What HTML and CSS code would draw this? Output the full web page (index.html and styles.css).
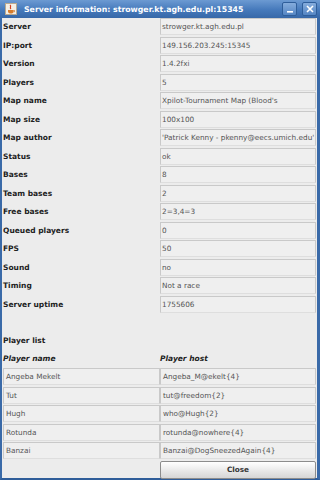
FILE: index.html
```html
<!DOCTYPE html>
<html lang="en">
<head>
    <meta charset="UTF-8">
    <meta name="viewport" content="width=device-width, initial-scale=1.0">
    <title>Server information</title>
    <link rel="stylesheet" href="styles.css">
</head>
<body>
    <div class="window">
        <div class="titlebar">
            <div class="app-icon">
                <svg width="12" height="12" viewBox="0 0 12 12">
                    <rect x="0.5" y="0.5" width="11" height="11" fill="#f4efe6" stroke="#b9a98f"/>
                    <path d="M5 2 C7 3.5 4 4.5 6 6" stroke="#d2401e" stroke-width="1.2" fill="none"/>
                    <path d="M3 7 H8.5 V8.5 C8.5 10 7.5 10.5 6 10.5 C4.5 10.5 3 10 3 8.5 Z" fill="#d77b2a"/>
                    <path d="M8.5 7.5 H9.5 V8.8 H8.5" stroke="#d77b2a" stroke-width="0.8" fill="none"/>
                </svg>
            </div>
            <div class="title">Server information: strowger.kt.agh.edu.pl:15345</div>
            <div class="win-btn">
                <svg width="10" height="10" viewBox="0 0 10 10"><rect x="2" y="7" width="6" height="1.6" fill="#fff"/></svg>
            </div>
            <div class="win-btn">
                <svg width="10" height="10" viewBox="0 0 10 10"><path d="M2 2 L8 8 M8 2 L2 8" stroke="#fff" stroke-width="1.6"/></svg>
            </div>
        </div>

        <div class="content">
            <div class="info">
                <div class="label">Server</div><div class="field">strowger.kt.agh.edu.pl</div>
                <div class="label">IP:port</div><div class="field">149.156.203.245:15345</div>
                <div class="label">Version</div><div class="field">1.4.2fxi</div>
                <div class="label">Players</div><div class="field">5</div>
                <div class="label">Map name</div><div class="field">Xpilot-Tournament Map (Blood's</div>
                <div class="label">Map size</div><div class="field">100x100</div>
                <div class="label">Map author</div><div class="field">'Patrick Kenny - pkenny@eecs.umich.edu'</div>
                <div class="label">Status</div><div class="field">ok</div>
                <div class="label">Bases</div><div class="field">8</div>
                <div class="label">Team bases</div><div class="field">2</div>
                <div class="label">Free bases</div><div class="field">2=3,4=3</div>
                <div class="label">Queued players</div><div class="field">0</div>
                <div class="label">FPS</div><div class="field">50</div>
                <div class="label">Sound</div><div class="field">no</div>
                <div class="label">Timing</div><div class="field">Not a race</div>
                <div class="label">Server uptime</div><div class="field">1755606</div>
            </div>

            <div class="section-title">Player list</div>

            <div class="players">
                <div class="head">Player name</div><div class="head">Player host</div>
                <div class="cell">Angeba Mekelt</div><div class="cell">Angeba_M@ekelt{4}</div>
                <div class="cell">Tut</div><div class="cell">tut@freedom{2}</div>
                <div class="cell">Hugh</div><div class="cell">who@Hugh{2}</div>
                <div class="cell">Rotunda</div><div class="cell">rotunda@nowhere{4}</div>
                <div class="cell">Banzai</div><div class="cell">Banzai@DogSneezedAgain{4}</div>
                <div></div><button class="close-btn">Close</button>
            </div>
        </div>
    </div>
</body>
</html>
```

FILE: styles.css
```css
* {
    margin: 0;
    padding: 0;
    box-sizing: border-box;
}

body {
    font-family: 'DejaVu Sans', 'Liberation Sans', sans-serif;
    font-size: 7.3px;
    color: #222;
    background: #3c6aa6;
}

.window {
    width: 320px;
    height: 480px;
    display: flex;
    flex-direction: column;
    border-left: 2px solid #3a6aa8;
    border-right: 3px solid #3a6aa8;
    border-bottom: 2px solid #2f5d99;
    background: #ececec;
}

.titlebar {
    height: 18px;
    flex: none;
    display: flex;
    align-items: center;
    gap: 3px;
    padding: 0 1px;
    margin: 0 -3px 0 -2px;
    background: linear-gradient(#6c9ad2, #4579bb 55%, #3768a8);
    color: #fff;
}

.app-icon {
    width: 14px;
    height: 14px;
    display: flex;
    align-items: center;
    justify-content: center;
    margin-left: 3px;
}

.title {
    flex: 1;
    font-weight: bold;
    font-size: 7.8px;
    padding-left: 3px;
    white-space: nowrap;
    overflow: hidden;
}

.win-btn {
    width: 15px;
    height: 14px;
    display: flex;
    align-items: center;
    justify-content: center;
    background: linear-gradient(#85acdc, #5586c4);
    border: 1px solid #2f5e9a;
    border-radius: 2px;
    margin-right: 2px;
}

.content {
    flex: 1;
    display: flex;
    flex-direction: column;
    padding: 0 1px 0 1px;
}

.info {
    display: grid;
    grid-template-columns: 157px 1fr;
    grid-auto-rows: 17px;
    row-gap: 1.5px;
}

.label {
    font-weight: bold;
    font-size: 7.5px;
    display: flex;
    align-items: center;
}

.field {
    display: flex;
    align-items: center;
    padding-left: 1px;
    border: 1px solid #c9c9c9;
    border-bottom-color: #dedede;
    background: #efefef;
    color: #555;
    white-space: nowrap;
    overflow: hidden;
}

.section-title {
    font-weight: bold;
    font-size: 7.5px;
    margin-top: 19px;
    height: 18px;
    display: flex;
    align-items: center;
}

.players {
    display: grid;
    grid-template-columns: 157px 1fr;
    grid-auto-rows: 17px;
    row-gap: 1.5px;
}

.head {
    font-weight: bold;
    font-style: italic;
    font-size: 7.5px;
    display: flex;
    align-items: center;
}

.cell {
    display: flex;
    align-items: center;
    padding-left: 2px;
    border: 1px solid #c9c9c9;
    border-bottom-color: #dedede;
    background: #efefef;
    color: #555;
    white-space: nowrap;
    overflow: hidden;
}

.close-btn {
    font-family: inherit;
    font-size: 7.3px;
    font-weight: bold;
    color: #333;
    border: 1px solid #8c8c8c;
    border-radius: 2px;
    background: linear-gradient(#ffffff, #e6e6e6 60%, #d6d6d6);
    height: 18px;
}
```
